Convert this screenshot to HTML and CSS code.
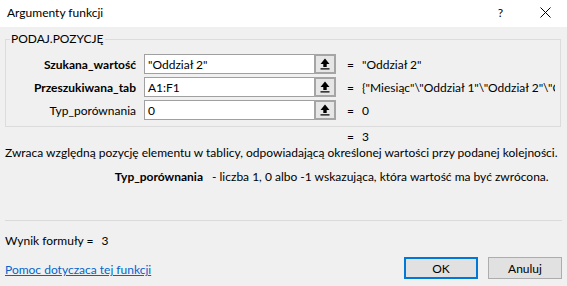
FILE: index.html
```html
<!DOCTYPE html>
<html lang="pl">
<head>
    <meta charset="UTF-8">
    <title>Argumenty funkcji</title>
    <link rel="stylesheet" href="styles.css">
</head>
<body>
    <div class="titlebar">
        <span class="title">Argumenty funkcji</span>
        <div class="title-buttons">
            <span class="help">?</span>
            <svg class="close" width="11" height="11" viewBox="0 0 11 11">
                <path d="M0.5 0.5 L10.5 10.5 M10.5 0.5 L0.5 10.5" stroke="#000" stroke-width="1"/>
            </svg>
        </div>
    </div>

    <div class="content">
        <fieldset class="group">
            <legend>PODAJ.POZYCJĘ</legend>

            <div class="arg-row">
                <label class="arg-label required">Szukana_wartość</label>
                <div class="field">
                    <span class="field-text">"Oddział 2"</span>
                    <span class="ref-btn">
                        <svg width="10" height="12" viewBox="0 0 10 12"><path d="M5 0.5 L9.5 6 H6.7 V9 H3.3 V6 H0.5 Z M0.5 10.3 H9.5 V11.6 H0.5 Z" fill="#000"/></svg>
                    </span>
                </div>
                <span class="eq">=</span>
                <span class="arg-value">"Oddział 2"</span>
            </div>

            <div class="arg-row">
                <label class="arg-label required">Przeszukiwana_tab</label>
                <div class="field">
                    <span class="field-text">A1:F1</span>
                    <span class="ref-btn">
                        <svg width="10" height="12" viewBox="0 0 10 12"><path d="M5 0.5 L9.5 6 H6.7 V9 H3.3 V6 H0.5 Z M0.5 10.3 H9.5 V11.6 H0.5 Z" fill="#000"/></svg>
                    </span>
                </div>
                <span class="eq">=</span>
                <span class="arg-value">{"Miesiąc"\"Oddział 1"\"Oddział 2"\"Oddział 3"\"Oddział 4"}</span>
            </div>

            <div class="arg-row">
                <label class="arg-label">Typ_porównania</label>
                <div class="field">
                    <span class="field-text">0</span>
                    <span class="ref-btn">
                        <svg width="10" height="12" viewBox="0 0 10 12"><path d="M5 0.5 L9.5 6 H6.7 V9 H3.3 V6 H0.5 Z M0.5 10.3 H9.5 V11.6 H0.5 Z" fill="#000"/></svg>
                    </span>
                </div>
                <span class="eq">=</span>
                <span class="arg-value">0</span>
            </div>
        </fieldset>

        <div class="result"><span class="eq">=</span><span>3</span></div>

        <p class="description">Zwraca względną pozycję elementu w tablicy, odpowiadającą określonej wartości przy podanej kolejności.</p>

        <div class="arg-help">
            <span class="arg-help-name">Typ_porównania</span>
            <span>- liczba 1, 0 albo -1 wskazująca, która wartość ma być zwrócona.</span>
        </div>

        <hr class="separator">

        <div class="formula-result">Wynik formuły =<span class="formula-value">3</span></div>

        <div class="footer">
            <a href="#" class="help-link">Pomoc dotyczaca tej funkcji</a>
            <div class="buttons">
                <button class="btn btn-default">OK</button>
                <button class="btn">Anuluj</button>
            </div>
        </div>
    </div>
</body>
</html>
```

FILE: styles.css
```css
body {
    margin: 0;
    background: #f0f0f0;
    font-family: Lato, "Liberation Sans", sans-serif;
    font-size: 12px;
    color: #000;
    overflow: hidden;
}

.titlebar {
    height: 27px;
    background: white;
    display: flex;
    align-items: center;
    justify-content: space-between;
    padding: 0 16px 0 7px;
}

.title {
    font-size: 12px;
    margin-top: -2px;
}

.title-buttons {
    display: flex;
    align-items: center;
    gap: 37px;
    margin-top: -3px;
}

.help {
    font-size: 12px;
}

.content {
    padding: 0 5px 0 5px;
}

.group {
    margin: 4px 1px 0 0;
    padding: 7px 0 6px 0;
    border: 1px solid #dcdcdc;
    min-width: 0;
}

.group legend {
    padding: 0 1px;
    margin-left: 4px;
    line-height: 16px;
}

.arg-row {
    display: flex;
    align-items: center;
    height: 20px;
    margin-bottom: 3px;
    white-space: nowrap;
}

.arg-row:last-child {
    margin-bottom: 0;
}

.arg-label {
    width: 130px;
    text-align: right;
    margin-right: 8px;
}

.arg-label.required {
    font-weight: bold;
}

.field {
    width: 192px;
    height: 20px;
    box-sizing: border-box;
    border: 1px solid #a0a0a0;
    background: white;
    display: flex;
    align-items: center;
}

.field-text {
    flex: 1;
    padding-left: 3px;
}

.ref-btn {
    width: 22px;
    height: 20px;
    margin: -1px -1px -1px 0;
    box-sizing: border-box;
    border: 2px solid #a5a5a5;
    background: #e6e6e6;
    display: flex;
    align-items: center;
    justify-content: center;
}

.eq {
    margin-left: 11px;
    width: 15px;
}

.arg-value {
    overflow: hidden;
    flex: 1;
    min-width: 0;
    margin-right: 5px;
}

.result {
    display: flex;
    line-height: 16px;
    margin-top: 2px;
    padding-left: 331px;
}

.description {
    margin: 0;
    line-height: 16px;
    white-space: nowrap;
}

.arg-help {
    display: flex;
    gap: 9px;
    line-height: 16px;
    margin-top: 8px;
    white-space: nowrap;
}

.arg-help-name {
    width: 198px;
    text-align: right;
    font-weight: bold;
}

.separator {
    border: 0;
    border-top: 1px solid #dadada;
    margin: 35px 0 0 0;
}

.formula-result {
    line-height: 16px;
    margin-top: 12px;
}

.formula-value {
    margin-left: 8px;
}

.footer {
    display: flex;
    justify-content: space-between;
    align-items: center;
    margin-top: 8px;
}

.help-link {
    color: #0066cc;
    padding-top: 3px;
}

.buttons {
    display: flex;
    gap: 10px;
}

.btn {
    width: 74px;
    height: 22px;
    box-sizing: border-box;
    border: 1px solid #adadad;
    background: #e1e1e1;
    font-family: inherit;
    font-size: 12px;
    padding: 0;
    color: #000;
}

.btn-default {
    border: 2px solid #0078d7;
}
```
